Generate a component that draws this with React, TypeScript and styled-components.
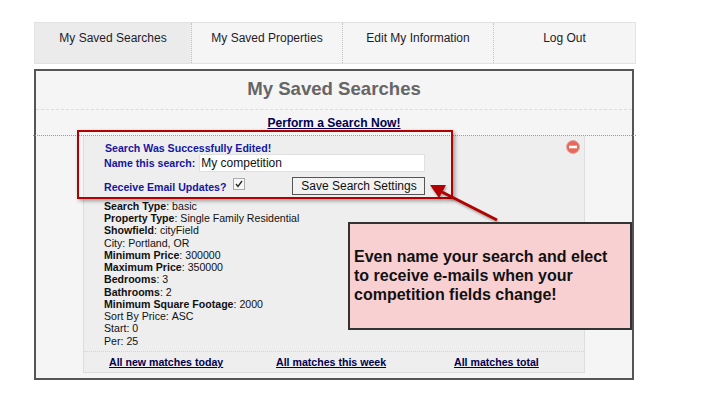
import React from 'react';
import styled, { createGlobalStyle } from 'styled-components';

const Global = createGlobalStyle`
  html, body { margin: 0; padding: 0; background: #fff; }
  body { font-family: "Liberation Sans", Arial, sans-serif; color: #111; }
`;
const Page = styled.div`position: relative; width: 704px; height: 413px; padding: 22px 0 0 34px; box-sizing: border-box; overflow: hidden;`;
const Tabs = styled.nav`display: grid; grid-template-columns: 157px 151px 151px 1fr; width: 602px; height: 42px; box-sizing: border-box; border: 1px solid #e2e2e2; background: #f5f5f5;`;
const Tab = styled.a<{ $active?: boolean }>`
  font-size: 12px; color: #1c1c2c; text-align: center; padding-top: 8px; line-height: 14px;
  background: ${p => (p.$active ? '#ebebeb' : 'transparent')};
  &:not(:last-child) { border-right: 1px dotted #c4c4c4; }
`;
const Panel = styled.main`margin-top: 5px; width: 600px; height: 311px; box-sizing: border-box; border: 2px solid #555; background: #f5f5f5;`;
const Title = styled.h1`margin: 0; height: 39px; box-sizing: border-box; padding-top: 6px; font-size: 18.6px; line-height: 24px; font-weight: bold; color: #666; text-align: center; border-bottom: 1px dashed #dcdcdc;`;
const PerformRow = styled.div`height: 25px; box-sizing: border-box; padding-top: 6px; text-align: center; font-size: 12.1px; line-height: 14px; font-weight: bold;`;
const StrongLink = styled.a`color: #000050; text-decoration: underline; font-weight: bold;`;
const Rule = styled.div`margin: 0 -4px 0 -3px; border-top: 1px dotted #999;`;
const Card = styled.section`position: relative; margin-left: 47px; width: 502px; height: 237px; box-sizing: border-box; background: #eeeeee; border: 1px solid #dedede; border-top: 0; padding: 5px 0 0 20px; display: flex; flex-direction: column;`;
const Notice = styled.div`font-size: 10.6px; line-height: 12px; margin-top: 1px; font-weight: bold; color: #1616a0; margin-left: 1px;`;
const FieldRow = styled.div`display: flex; align-items: center; height: 18px; font-size: 10.6px; font-weight: bold; color: #1616a0;`;
const NameInput = styled.div`margin-left: 4px; width: 226px; height: 18px; box-sizing: border-box; background: #fff; border: 1px solid #e0e0e0; font-size: 12px; font-weight: normal; color: #111; line-height: 16px; padding-left: 1px;`;
const EmailRow = styled.div`display: flex; align-items: flex-start; height: 25px; margin-top: 5px; font-size: 10.6px; font-weight: bold; color: #1616a0;`;
const EmailLabel = styled.span`margin-top: 3px; line-height: 14px;`;
const Check = styled.span`margin: 1px 0 0 7px; width: 12px; height: 12px; box-sizing: border-box; background: #f8f8f8; border: 1px solid #aaa; display: flex;`;
const SaveButton = styled.button`margin-left: 47px; width: 133px; height: 18px; box-sizing: border-box; padding: 0; background: #f2f2f2; border: 1px solid #555; font-family: inherit; font-size: 12px; line-height: 14px; color: #111;`;
const Details = styled.dl`margin: 0; font-size: 10.6px; line-height: 12.25px; color: #111;`;
const Item = styled.div`display: block;`;
const Key = styled.dt<{ $bold?: boolean }>`display: inline; font-weight: ${p => (p.$bold ? 'bold' : 'normal')};`;
const Val = styled.dd`display: inline; margin: 0;`;
const Footer = styled.footer`margin: 4.5px 0 0 -20px; height: 22px; box-sizing: border-box; border-top: 1px dotted #d4d4d4; position: relative; display: grid; grid-template-columns: 167px 178px 1fr; justify-items: start; padding: 4px 0 0 25px; font-size: 10.6px; line-height: 13px; font-weight: bold;`;
const RemoveIcon = styled.svg`position: absolute; right: 4px; top: 4px;`;
const RedBox = styled.div`position: absolute; left: 77px; top: 130px; width: 376px; height: 69px; box-sizing: border-box; border: 2px solid #b30000; box-shadow: 2px 2px 4px rgba(0,0,0,.35); pointer-events: none;`;
const Arrow = styled.svg`position: absolute; left: 420px; top: 175px; filter: drop-shadow(1px 2px 1px rgba(0,0,0,.3));`;
const Callout = styled.aside`position: absolute; left: 348px; top: 222px; width: 284px; height: 108px; box-sizing: border-box; border: 2px solid #333; background: #f9d0d2; padding: 23px 0 0 4px; font-size: 16px; line-height: 19px; font-weight: bold; color: #111;`;

const rows: [string, string, boolean][] = [
  ['Search Type', 'basic', true],
  ['Property Type', 'Single Family Residential', true],
  ['Showfield', 'cityField', true],
  ['City', 'Portland, OR', false],
  ['Minimum Price', '300000', true],
  ['Maximum Price', '350000', true],
  ['Bedrooms', '3', true],
  ['Bathrooms', '2', true],
  ['Minimum Square Footage', '2000', true],
  ['Sort By Price', 'ASC', false],
  ['Start', '0', false],
  ['Per', '25', false],
];

export default function App() {
  return (
    <Page>
      <Global />
      <Tabs>
        <Tab $active>My Saved Searches</Tab>
        <Tab>My Saved Properties</Tab>
        <Tab>Edit My Information</Tab>
        <Tab>Log Out</Tab>
      </Tabs>
      <Panel>
        <Title>My Saved Searches</Title>
        <PerformRow><StrongLink>Perform a Search Now!</StrongLink></PerformRow>
        <Rule />
        <Card>
          <RemoveIcon width="14" height="14" viewBox="0 0 14 14">
            <circle cx="7" cy="7" r="6.5" fill="#e8665c" stroke="#dca8a2" strokeWidth="1" />
            <rect x="3" y="5.7" width="8" height="2.6" fill="#fff" />
          </RemoveIcon>
          <Notice>Search Was Successfully Edited!</Notice>
          <FieldRow>
            Name this search:
            <NameInput>My competition</NameInput>
          </FieldRow>
          <EmailRow>
            <EmailLabel>Receive Email Updates?</EmailLabel>
            <Check>
              <svg width="10" height="10" viewBox="0 0 10 10">
                <path d="M2 5 L4 7.5 L8 2" fill="none" stroke="#222" strokeWidth="1.3" />
              </svg>
            </Check>
            <SaveButton>Save Search Settings</SaveButton>
          </EmailRow>
          <Details>
            {rows.map(([k, v, b]) => (
              <Item key={k}>
                <Key $bold={b}>{k}</Key>: <Val>{v}</Val>
              </Item>
            ))}
          </Details>
          <Footer>
            <StrongLink>All new matches today</StrongLink>
            <StrongLink>All matches this week</StrongLink>
            <StrongLink>All matches total</StrongLink>
          </Footer>
        </Card>
      </Panel>
      <RedBox />
      <Arrow width="90" height="55" viewBox="0 0 90 55">
        <path d="M77 45 L22 17" stroke="#b30000" strokeWidth="3" fill="none" />
        <path d="M10 10 L26 10 L19 23 Z" fill="#b30000" />
      </Arrow>
      <Callout>
        Even name your search and elect<br />to receive e-mails when your<br />competition fields change!
      </Callout>
    </Page>
  );
}
